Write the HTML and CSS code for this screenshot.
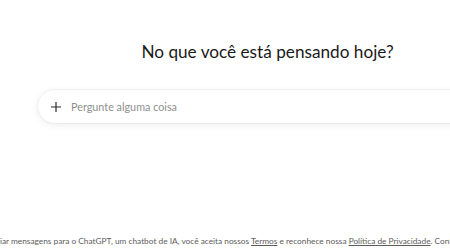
FILE: index.html
```html
<!DOCTYPE html>
<html lang="pt-BR">
<head>
<meta charset="utf-8">
<link rel="stylesheet" href="styles.css">
</head>
<body>
<div class="page">
  <main class="main">
    <h1 class="title">No que você está pensando hoje?</h1>
    <div class="composer">
      <span class="plus">
        <svg width="12" height="12" viewBox="0 0 12 12"><path d="M6 1v10M1 6h10" stroke="#2b2b2b" stroke-width="1.2" fill="none"/></svg>
      </span>
      <span class="placeholder">Pergunte alguma coisa</span>
    </div>
  </main>
  <footer class="footer">
    <p class="legal">Ao enviar mensagens para o ChatGPT, um chatbot de IA, você aceita nossos <a href="#">Termos</a> e reconhece nossa <a href="#">Política de Privacidade</a>. Confira as <a href="#">Preferências de cookies</a>.</p>
  </footer>
</div>
</body>
</html>
```
FILE: styles.css
```css
html, body {
  margin: 0;
  padding: 0;
  background: #ffffff;
  overflow: hidden;
}
body {
  width: 450px;
  height: 250px;
  font-family: Lato, "Open Sans", sans-serif;
  color: #0d0d0d;
}
.page {
  width: 535px;
  height: 250px;
  display: flex;
  flex-direction: column;
}
.main {
  flex: 1;
  display: flex;
  flex-direction: column;
  align-items: center;
  padding-top: 39px;
}
.title {
  margin: 0;
  font-size: 17.2px;
  font-weight: 400;
  line-height: 26px;
  color: #1a1a1a;
}
.composer {
  margin-top: 25px;
  width: 459px;
  height: 33px;
  box-sizing: border-box;
  border-radius: 17px;
  background: #fff;
  box-shadow: 0 0 0 1px rgba(0,0,0,0.04), 0 2px 8px rgba(0,0,0,0.07);
  display: flex;
  align-items: center;
  padding-left: 12px;
  gap: 9px;
}
.plus {
  width: 12px;
  height: 12px;
  display: flex;
}
.placeholder {
  font-size: 10.8px;
  color: #8f8f8f;
}
.footer {
  height: 20px;
  box-sizing: border-box;
  padding-top: 5px;
  display: flex;
  justify-content: center;
  align-items: flex-start;
}
.legal {
  margin: 0;
  white-space: nowrap;
  font-size: 8.3px;
  color: #5d5d5d;
  line-height: 12px;
}
.legal a {
  color: #5d5d5d;
  text-decoration: underline;
}
```
